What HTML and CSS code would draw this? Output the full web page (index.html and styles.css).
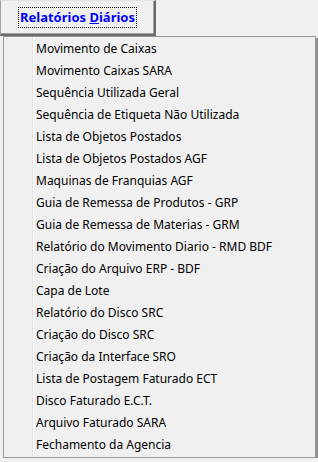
FILE: index.html
```html
<!DOCTYPE html>
<html lang="pt">
<head>
    <meta charset="UTF-8">
    <title>Relatórios Diários</title>
    <link rel="stylesheet" href="styles.css">
</head>
<body>
    <!-- Menu button -->
    <div class="menu-button">
        <span class="focus-box">Relatórios <u>D</u>iários</span>
    </div>

    <!-- Dropdown list -->
    <ul class="dropdown">
        <li>Movimento de Caixas</li>
        <li>Movimento Caixas SARA</li>
        <li>Sequência Utilizada Geral</li>
        <li>Sequência de Etiqueta Não Utilizada</li>
        <li>Lista de Objetos Postados</li>
        <li>Lista de Objetos Postados AGF</li>
        <li>Maquinas de Franquias AGF</li>
        <li>Guia de Remessa de Produtos - GRP</li>
        <li>Guia de Remessa de Materias - GRM</li>
        <li>Relatório do Movimento Diario - RMD BDF</li>
        <li>Criação do Arquivo ERP - BDF</li>
        <li>Capa de Lote</li>
        <li>Relatório do Disco SRC</li>
        <li>Criação do Disco SRC</li>
        <li>Criação da Interface SRO</li>
        <li>Lista de Postagem Faturado ECT</li>
        <li>Disco Faturado E.C.T.</li>
        <li>Arquivo Faturado SARA</li>
        <li>Fechamento da Agencia</li>
    </ul>
</body>
</html>
```

FILE: styles.css
```css
body {
    margin: 0;
    background-color: #f0f0f0;
    font-family: "Noto Sans", "DejaVu Sans", sans-serif;
    font-size: 12px;
    color: #000;
}

/* Button at the top */
.menu-button {
    box-sizing: border-box;
    width: 156px;
    height: 36px;
    border-left: 1px solid #a0a0a0;
    border-top: 1px solid #e3e3e3;
    border-right: 2px solid #696969;
    border-bottom: 2px solid #696969;
    box-shadow: inset -1px -1px 0 #a0a0a0;
    display: flex;
    justify-content: center;
    align-items: center;
}

.focus-box {
    border: 1px dotted #000;
    padding: 1px 1px 2px 1px;
    color: #0000ff;
    font-weight: bold;
    font-size: 13px;
    line-height: 16px;
}

.focus-box u {
    text-decoration-thickness: 1px;
}

/* Dropdown */
.dropdown {
    list-style: none;
    box-sizing: border-box;
    width: 313px;
    margin: 0 0 0 3px;
    padding: 1px 0 1px 0;
    border: 1px solid #979797;
    background-color: #f0f0f0;
    background-image: linear-gradient(to right, transparent 28px, #e2e3e3 28px, #e2e3e3 29px, #fff 29px, #fff 30px, transparent 30px);
    box-shadow: 2px 2px 0 #8c8c8c;
}

.dropdown li {
    height: 22px;
    line-height: 22px;
    padding-left: 32px;
    white-space: nowrap;
}
```
